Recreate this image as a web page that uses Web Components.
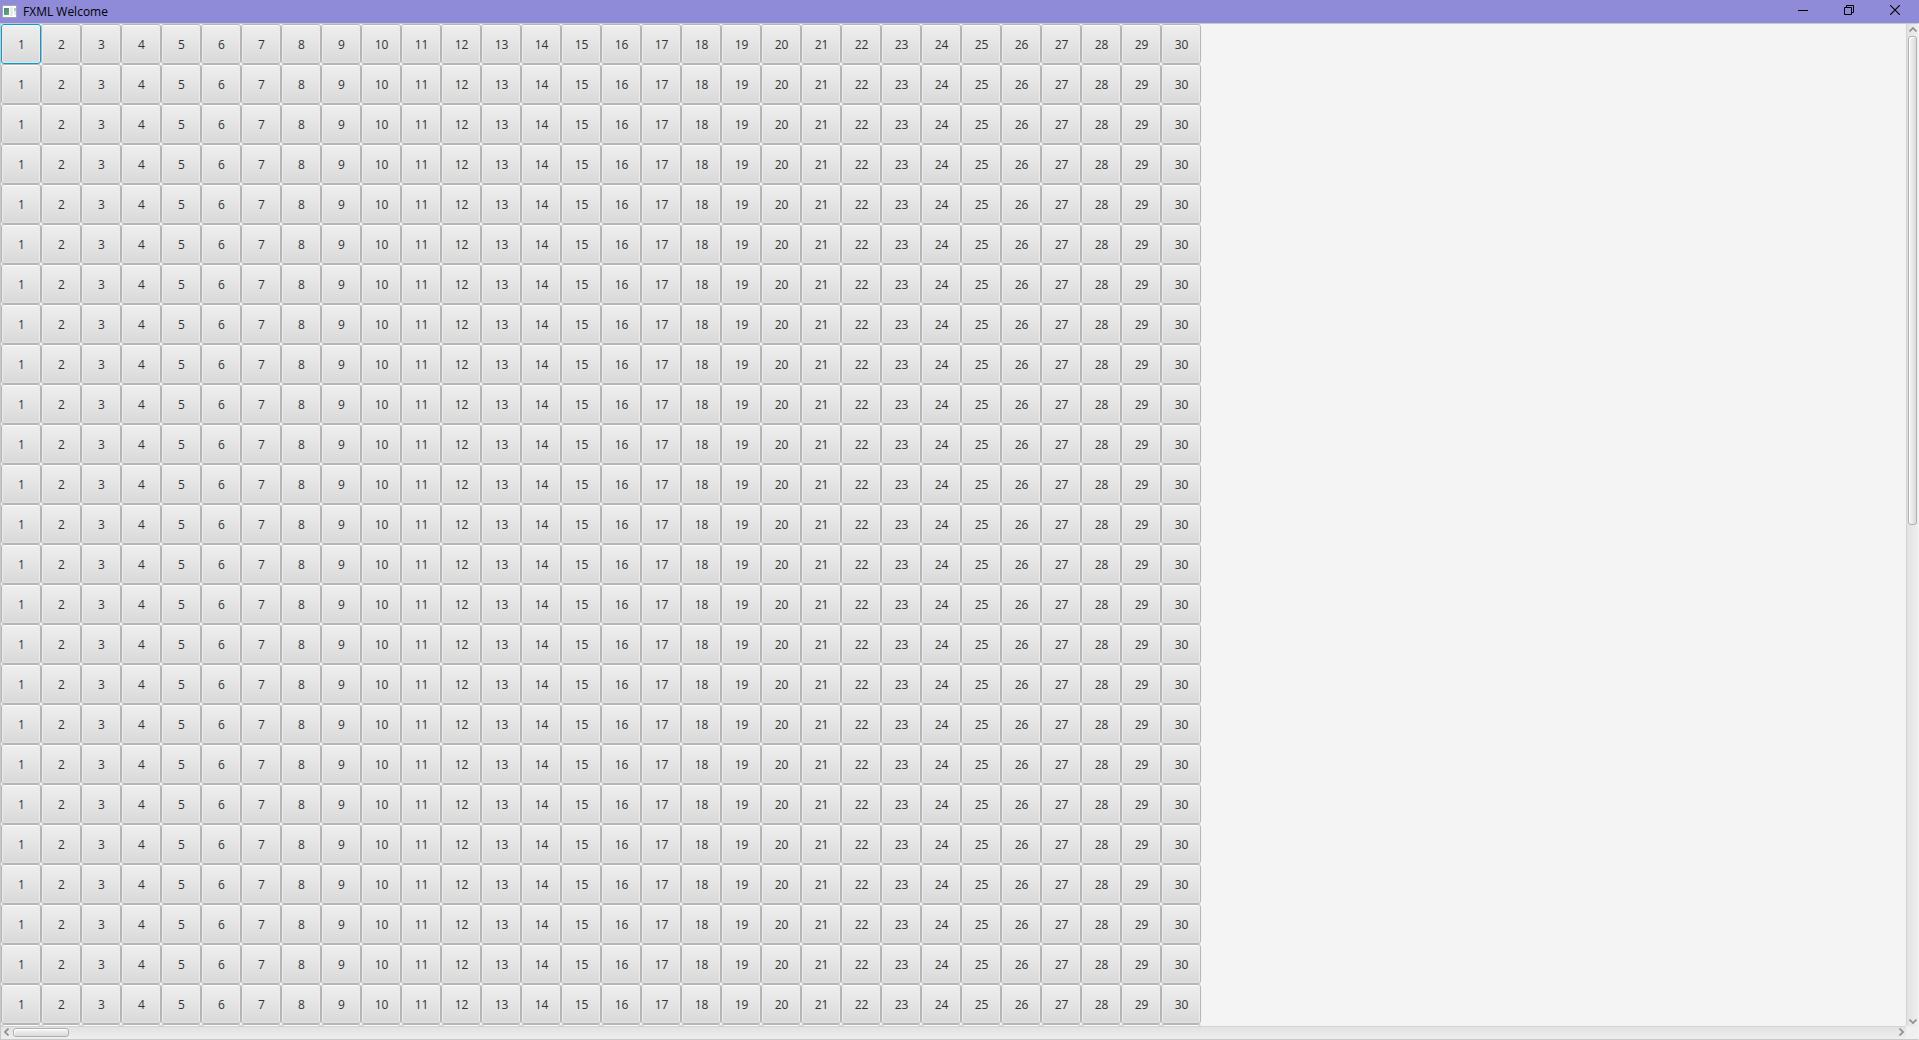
<!DOCTYPE html>
<html lang="en">
<head>
<meta charset="utf-8">
<title>FXML Welcome</title>
<style>
html, body { height: 100%; margin: 0; overflow: hidden; }
body { font-family: "Open Sans", "Noto Sans", sans-serif; font-size: 12px; }
</style>
</head>
<body>
<app-window>
  <title-bar slot="title">FXML Welcome</title-bar>
  <number-grid rows="26" columns="30"></number-grid>
  <scroll-bar slot="vertical" direction="vertical"></scroll-bar>
  <scroll-bar slot="horizontal" direction="horizontal"></scroll-bar>
</app-window>
<script>
class AppWindow extends HTMLElement {
  constructor() {
    super();
    this.attachShadow({ mode: "open" }).innerHTML = `
      <style>
        :host { display: flex; flex-direction: column; height: 100vh; background: #f4f4f4; }
        .pane { flex: 1; min-height: 0; display: grid; box-sizing: border-box;
          grid-template-columns: minmax(0, 1fr) 12px; grid-template-rows: minmax(0, 1fr) 13px;
          border: 1px solid #c8c8c8; border-right-color: #f4f4f4; }
        .view { overflow: hidden; }
        .corner { background: #f0f0f0; }
      </style>
      <slot name="title"></slot>
      <main class="pane">
        <div class="view"><slot></slot></div>
        <slot name="vertical"></slot>
        <slot name="horizontal"></slot>
        <div class="corner"></div>
      </main>`;
  }
}

class TitleBar extends HTMLElement {
  constructor() {
    super();
    this.attachShadow({ mode: "open" }).innerHTML = `
      <style>
        :host { display: flex; align-items: center; height: 23px; padding-right: 1px;
          box-sizing: border-box; background: #8f8bd9; color: #000; }
        svg { display: block; flex: none; }
        .icon { margin: 0 6px 0 2px; }
        .name { flex: 1; font-size: 12px; line-height: 23px; }
        button { width: 46px; height: 23px; padding: 0 0 3px; border: 0; background: none;
          display: flex; align-items: center; justify-content: center; }
      </style>
      <svg class="icon" width="15" height="13" viewBox="0 0 15 13" aria-hidden="true">
        <defs><linearGradient id="g" x2="0.6" y2="1"><stop stop-color="#4d7f9e"/><stop offset="1" stop-color="#5da878"/></linearGradient></defs>
        <rect x=".5" y=".5" width="14" height="12" fill="#fff" stroke="#a5a5ad"/>
        <rect x="2" y="3" width="5" height="7" fill="url(#g)"/>
        <rect x="8" y="2" width="3" height="9" fill="#e8e8e8"/>
        <rect x="12" y="3" width="2" height="3" fill="#a5d0c5"/>
        <rect x="12" y="6" width="2" height="4" fill="#e8e8e8"/>
      </svg>
      <span class="name"><slot></slot></span>
      <button aria-label="Minimize"><svg width="10" height="10"><path d="M0 5.5H10" stroke="#000"/></svg></button>
      <button aria-label="Restore"><svg width="10" height="10" fill="none" stroke="#000"><path d="M.5 2.5H7.5V9.5H.5Z M2.5 2.5V.5H9.5V7.5H7.5"/></svg></button>
      <button aria-label="Close"><svg width="10" height="10"><path d="M0 0L10 10M10 0L0 10" stroke="#000" stroke-width="1.1"/></svg></button>`;
  }
}

class NumberGrid extends HTMLElement {
  connectedCallback() {
    if (this.shadowRoot) return;
    const rows = Number(this.getAttribute("rows"));
    const columns = Number(this.getAttribute("columns"));
    const root = this.attachShadow({ mode: "open" });
    root.innerHTML = `
      <style>
        :host { display: grid; grid-template-columns: repeat(${columns}, 40px); grid-auto-rows: 40px; }
      </style>`;
    for (let row = 0; row < rows; row++) {
      for (let column = 1; column <= columns; column++) {
        const cell = document.createElement("number-button");
        cell.textContent = column;
        if (row === 0 && column === 1) cell.setAttribute("active", "");
        root.append(cell);
      }
    }
  }
}

class NumberButton extends HTMLElement {
  constructor() {
    super();
    this.attachShadow({ mode: "open" }).innerHTML = `
      <style>
        :host { display: block; }
        button { box-sizing: border-box; width: 100%; height: 100%; padding: 2px 0 0 1px;
          border: 1px solid #b5b5b5; border-radius: 3px;
          background: linear-gradient(#efefef, #d9d9d9);
          box-shadow: inset 0 1px #fdfdfd, inset 1px 0 #ececec, inset -1px 0 #ececec, inset 0 -1px #e2e2e2;
          font: inherit; line-height: 16px; color: #333; text-align: center; }
        :host([active]) button { border-color: #039ed3; }
      </style>
      <button><slot></slot></button>`;
  }
}

class ScrollBar extends HTMLElement {
  constructor() {
    super();
    this.attachShadow({ mode: "open" }).innerHTML = `
      <style>
        :host { display: flex; box-sizing: border-box; min-width: 0; min-height: 0; }
        :host([direction="vertical"]) { flex-direction: column; border-left: 1px solid #d3d3d3;
          background: linear-gradient(90deg, #e2e2e2, #eeeeee); }
        :host([direction="horizontal"]) { border-top: 1px solid #d3d3d3;
          background: linear-gradient(#e2e2e2, #eeeeee); }
        button { flex: none; display: flex; align-items: center; justify-content: center;
          box-sizing: border-box; padding: 0; border: 0; background: none; }
        svg { display: block; flex: none; fill: none; stroke: #8c8c8c; stroke-width: 1.6; }
        .track { flex: 1; min-width: 0; min-height: 0; display: flex; }
        .thumb { box-sizing: border-box; border: 1px solid #b0b0b0; border-radius: 3px; }
        :host([direction="vertical"]) button { height: 12px; }
        :host([direction="vertical"]) .back { padding-bottom: 2px; }
        :host([direction="vertical"]) .next { padding-top: 2px; }
        :host([direction="vertical"]) .track { padding: 0 1px; }
        :host([direction="vertical"]) .thumb { width: 100%; height: 50%;
          background: linear-gradient(90deg, #f6f6f6, #dadada); box-shadow: inset 1px 1px #fff; }
        :host([direction="horizontal"]) button { width: 12px; }
        :host([direction="horizontal"]) .back { padding: 0 2px 2px 0; }
        :host([direction="horizontal"]) .next { padding: 0 0 2px 2px; }
        :host([direction="horizontal"]) .track { padding: 1px 0 2px; }
        :host([direction="horizontal"]) .thumb { width: 3%; height: 100%;
          background: linear-gradient(#f6f6f6, #dadada); box-shadow: inset 1px 1px #fff; }
      </style>
      <button class="back"></button><div class="track"><div class="thumb"></div></div><button class="next"></button>`;
  }
  connectedCallback() {
    const vertical = this.getAttribute("direction") === "vertical";
    const set = (name, label, size, path) => {
      const button = this.shadowRoot.querySelector(name);
      button.setAttribute("aria-label", label);
      button.innerHTML = `<svg width="${size[0]}" height="${size[1]}"><path d="${path}"/></svg>`;
    };
    if (vertical) {
      set(".back", "Scroll up", [8, 5], "M.5 4.5L4 1L7.5 4.5");
      set(".next", "Scroll down", [8, 5], "M.5 .5L4 4L7.5 .5");
    } else {
      set(".back", "Scroll left", [5, 8], "M4.5 .5L1 4L4.5 7.5");
      set(".next", "Scroll right", [5, 8], "M.5 .5L4 4L.5 7.5");
    }
  }
}

customElements.define("app-window", AppWindow);
customElements.define("title-bar", TitleBar);
customElements.define("number-button", NumberButton);
customElements.define("number-grid", NumberGrid);
customElements.define("scroll-bar", ScrollBar);
</script>
</body>
</html>
